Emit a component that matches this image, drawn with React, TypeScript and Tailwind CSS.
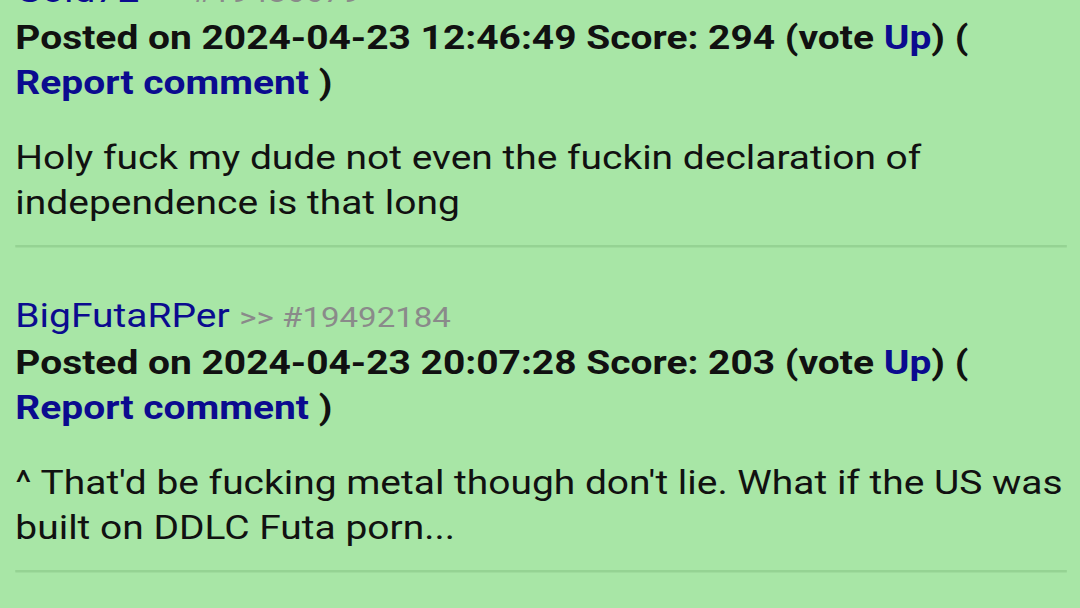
const comments = [
  {
    name: "Gold72",
    id: "19486679",
    posted: "2024-04-23 12:46:49",
    score: 294,
    body: "Holy fuck my dude not even the fuckin declaration of independence is that long",
  },
  {
    name: "BigFutaRPer",
    id: "19492184",
    posted: "2024-04-23 20:07:28",
    score: 203,
    body: "^ That'd be fucking metal though don't lie. What if the US was built on DDLC Futa porn...",
  },
]

export default function App() {
  return (
    <div className="h-[608px] overflow-hidden bg-[#a8e6a6] font-['Roboto',sans-serif] text-[33px] leading-[45px] text-[#111]">
      {/* the capture is stretched sideways, so the column is widened to match */}
      <div className="-mt-[32px] w-[915px] origin-top-left scale-x-[1.18] pl-[13px] pr-[11px]">
        {comments.map((c) => (
          <Comment key={c.id} {...c} />
        ))}
      </div>
    </div>
  )
}

function Comment({
  name,
  id,
  posted,
  score,
  body,
}: {
  name: string
  id: string
  posted: string
  score: number
  body: string
}) {
  return (
    <div>
      <div className="whitespace-nowrap">
        <span className="text-[#0b0b8f]">{name}</span>{" "}
        <span className="text-[28px] text-[#8a8a8a]">&gt;&gt; #{id}</span>
      </div>
      <p className="font-bold">
        Posted on {posted} Score: {score} (vote{" "}
        <span className="text-[#0b0b8f]">Up</span>) ({" "}
        <span className="text-[#0b0b8f]">Report comment</span> )
      </p>
      <p className="mt-[30px]">{body}</p>
      <div className="mt-[20px] mb-[45px] h-[3px] border-t-2 border-[#95d393] bg-[#9fdc9d]" />
    </div>
  )
}
